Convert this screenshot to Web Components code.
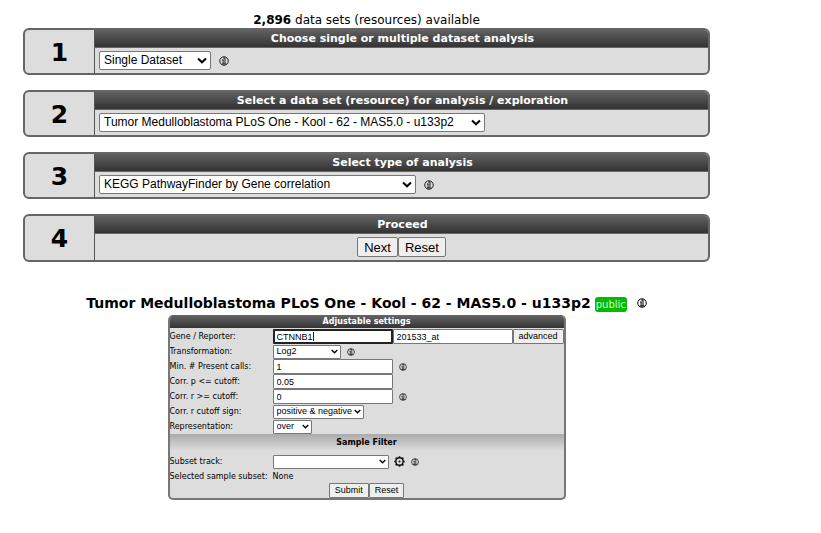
<!DOCTYPE html>
<html lang="en">
<head>
<meta charset="utf-8">
<title>Data set analysis</title>
<style>
  body { margin: 0; background: #fff; color: #000; font-family: Verdana, "DejaVu Sans", sans-serif; }
</style>
</head>
<body>
<analysis-page></analysis-page>

<template id="info-tpl">
  <style>
    :host { display: inline-flex; width: 10px; height: 10px; color: #222; }
    :host([small]) { width: 8px; height: 8px; }
    svg { width: 100%; height: 100%; display: block; }
  </style>
  <svg viewBox="0 0 20 20" role="img" aria-label="Information" fill="none" stroke="currentColor">
    <circle cx="10" cy="10" r="8.5" stroke-width="2"/>
    <path d="M8.2 7.5v9M12 3v13.5M6 8h3M6 16h8.5M8 4h4" stroke-width="2"/>
  </svg>
</template>

<template id="gear-tpl">
  <style>
    :host { display: inline-flex; width: 11px; height: 11px; }
    svg { width: 100%; height: 100%; display: block; }
  </style>
  <svg viewBox="0 0 22 22" role="img" aria-label="Settings">
    <circle cx="11" cy="11" r="7.4" fill="none" stroke="#111" stroke-width="3"/>
    <path d="M11 0.5v3M11 18.5v3M0.5 11h3M18.5 11h3M3.4 3.4l2 2M16.6 16.6l2 2M3.4 18.6l2-2M16.6 5.4l2-2" stroke="#111" stroke-width="3.4"/>
    <circle cx="11" cy="11" r="2" fill="#111"/>
  </svg>
</template>

<template id="step-tpl">
  <style>
    :host { display: grid; grid-template-columns: 70px 1fr; border: 2px solid #666; border-radius: 6px; background: #ddd; overflow: hidden; }
    .number { display: grid; place-items: center; padding-top: 2px; border-right: 1px solid #555; font-size: 25px; line-height: 30px; font-weight: bold; }
    h2 { margin: -2px -2px 0 0; padding-top: 3px; background: linear-gradient(#666, #333); border-bottom: 1px solid #666; color: #fff; font-size: 11px; line-height: 16px; font-weight: bold; text-align: center; }
    .content { display: flex; align-items: center; padding: 3px 4px; }
    :host([centered]) .content { justify-content: center; }
  </style>
  <div class="number"></div>
  <div><h2></h2><div class="content"><slot></slot></div></div>
</template>

<template id="panel-tpl">
  <style>
    :host { display: block; border: 2px solid #777; border-top: 0; border-radius: 5px; background: #ddd; overflow: hidden; }
    h3 { margin: 0 -2px 1px; background: linear-gradient(#666, #333); color: #fff; font-size: 8px; line-height: 13px; font-weight: bold; text-align: center; }
  </style>
  <h3></h3>
  <slot></slot>
</template>

<template id="row-tpl">
  <style>
    :host { display: grid; grid-template-columns: 103px 1fr; align-items: center; min-height: 15px; font-size: 8px; line-height: 13px; white-space: nowrap; }
    :host([compact]) { min-height: 14px; }
    .field { display: flex; align-items: center; }
  </style>
  <slot name="label"></slot>
  <div class="field"><slot></slot></div>
</template>

<template id="page-tpl">
  <style>
    :host { display: block; padding: 13px 111px 24px 23px; }
    .count { margin: 0; font-size: 12px; line-height: 15px; text-align: center; }
    .steps { display: grid; gap: 15px; }
    select, input, button { box-sizing: border-box; margin: 0; font: 13px/15px "Liberation Sans", Arial, sans-serif; color: #000; border: 1px solid #777; border-radius: 2px; }
    select { appearance: none; height: 19px; padding: 0 16px 0 4px; font-size: 12px; background: #fff url('data:image/svg+xml,<svg xmlns="http://www.w3.org/2000/svg" viewBox="0 0 10 7"><path d="M1 1.5L5 5.3L9 1.5" fill="none" stroke="black" stroke-width="2"/></svg>') no-repeat right 3px center / 10px 7px; }
    button { height: 20px; padding: 0 6px; background: #efefef; }
    step-card info-icon { margin-left: 8px; }
    .dataset { display: flex; justify-content: center; align-items: center; margin: 32px 0 3px; }
    .dataset info-icon { color: #000; }
    h1 { margin: 0; font-size: 14px; line-height: 18px; white-space: nowrap; }
    .badge { margin: 2px 10px 0 4px; padding: 0 1px; border-radius: 3px; background: #0b0; color: #cfc; font-size: 10px; line-height: 15px; }
    settings-panel { width: 398px; max-width: 100%; box-sizing: border-box; margin: 0 auto; }
    settings-panel select, settings-panel input, settings-panel button { font: 9px/11px "Liberation Sans", Arial, sans-serif; border-radius: 1px; }
    settings-panel select { height: 14px; padding: 0 3px; background-position: right 2px center; background-size: 7px 5px; }
    settings-panel input { width: 120px; height: 15px; padding: 0 3px; background: #fff; }
    settings-panel button { height: 15px; padding: 0 5px; }
    settings-panel input.current { border: 2px solid #222; padding: 0 2px; background: linear-gradient(#222, #222) no-repeat 38px center / 1px 9px #fff; }
    field-row info-icon { margin-left: 6px; }
    field-row gear-icon { margin-left: 5px; }
    h4 { margin: 0 0 3px; background: linear-gradient(#aaa, #ddd); font-size: 8px; line-height: 17px; text-align: center; }
    .w68 { width: 68px; } .w91 { width: 91px; } .w39 { width: 39px; } .w116 { width: 116px; }
    .w112 { width: 112px; } .w386 { width: 386px; } .w317 { width: 317px; }
    .actions { display: flex; justify-content: center; }
  </style>
  <p class="count"><b>2,896</b> data sets (resources) available</p>
  <div class="steps">
    <step-card number="1" heading="Choose single or multiple dataset analysis">
      <select class="w112" aria-label="Dataset mode"><option>Single Dataset</option></select><info-icon></info-icon>
    </step-card>
    <step-card number="2" heading="Select a data set (resource) for analysis / exploration">
      <select class="w386" aria-label="Data set"><option>Tumor Medulloblastoma PLoS One - Kool - 62 - MAS5.0 - u133p2</option></select>
    </step-card>
    <step-card number="3" heading="Select type of analysis">
      <select class="w317" aria-label="Type of analysis"><option>KEGG PathwayFinder by Gene correlation</option></select><info-icon></info-icon>
    </step-card>
    <step-card number="4" heading="Proceed" centered>
      <button type="button">Next</button><button type="button">Reset</button>
    </step-card>
  </div>
  <div class="dataset">
    <h1>Tumor Medulloblastoma PLoS One - Kool - 62 - MAS5.0 - u133p2</h1>
    <span class="badge">public</span><info-icon></info-icon>
  </div>
  <settings-panel heading="Adjustable settings">
    <field-row><label slot="label" for="gene">Gene / Reporter:</label><input id="gene" class="current" value="CTNNB1"><input aria-label="Reporter" value="201533_at"><button type="button">advanced</button></field-row>
    <field-row><label slot="label" for="transform">Transformation:</label><select id="transform" class="w68"><option>Log2</option></select><info-icon small></info-icon></field-row>
    <field-row><label slot="label" for="present">Min. # Present calls:</label><input id="present" value="1"><info-icon small></info-icon></field-row>
    <field-row><label slot="label" for="p">Corr. p &lt;= cutoff:</label><input id="p" value="0.05"></field-row>
    <field-row><label slot="label" for="r">Corr. r &gt;= cutoff:</label><input id="r" value="0"><info-icon small></info-icon></field-row>
    <field-row><label slot="label" for="sign">Corr. r cutoff sign:</label><select id="sign" class="w91"><option>positive &amp; negative</option></select></field-row>
    <field-row><label slot="label" for="rep">Representation:</label><select id="rep" class="w39"><option>over</option></select></field-row>
    <h4>Sample Filter</h4>
    <field-row><label slot="label" for="track">Subset track:</label><select id="track" class="w116"><option></option></select><gear-icon></gear-icon><info-icon small></info-icon></field-row>
    <field-row compact><span slot="label">Selected sample subset:</span><span>None</span></field-row>
    <div class="actions"><button type="button">Submit</button><button type="button">Reset</button></div>
  </settings-panel>
</template>

<script>
  class TemplateElement extends HTMLElement {
    constructor() {
      super();
      this.attachShadow({ mode: "open" }).append(
        document.getElementById(this.constructor.template).content.cloneNode(true));
    }
  }
  class InfoIcon extends TemplateElement { static template = "info-tpl"; }
  class GearIcon extends TemplateElement { static template = "gear-tpl"; }
  class FieldRow extends TemplateElement { static template = "row-tpl"; }
  class StepCard extends TemplateElement {
    static template = "step-tpl";
    connectedCallback() {
      this.shadowRoot.querySelector(".number").textContent = this.getAttribute("number");
      this.shadowRoot.querySelector("h2").textContent = this.getAttribute("heading");
    }
  }
  class SettingsPanel extends TemplateElement {
    static template = "panel-tpl";
    connectedCallback() {
      this.shadowRoot.querySelector("h3").textContent = this.getAttribute("heading");
    }
  }
  class AnalysisPage extends TemplateElement { static template = "page-tpl"; }
  customElements.define("info-icon", InfoIcon);
  customElements.define("gear-icon", GearIcon);
  customElements.define("field-row", FieldRow);
  customElements.define("step-card", StepCard);
  customElements.define("settings-panel", SettingsPanel);
  customElements.define("analysis-page", AnalysisPage);
</script>
</body>
</html>
